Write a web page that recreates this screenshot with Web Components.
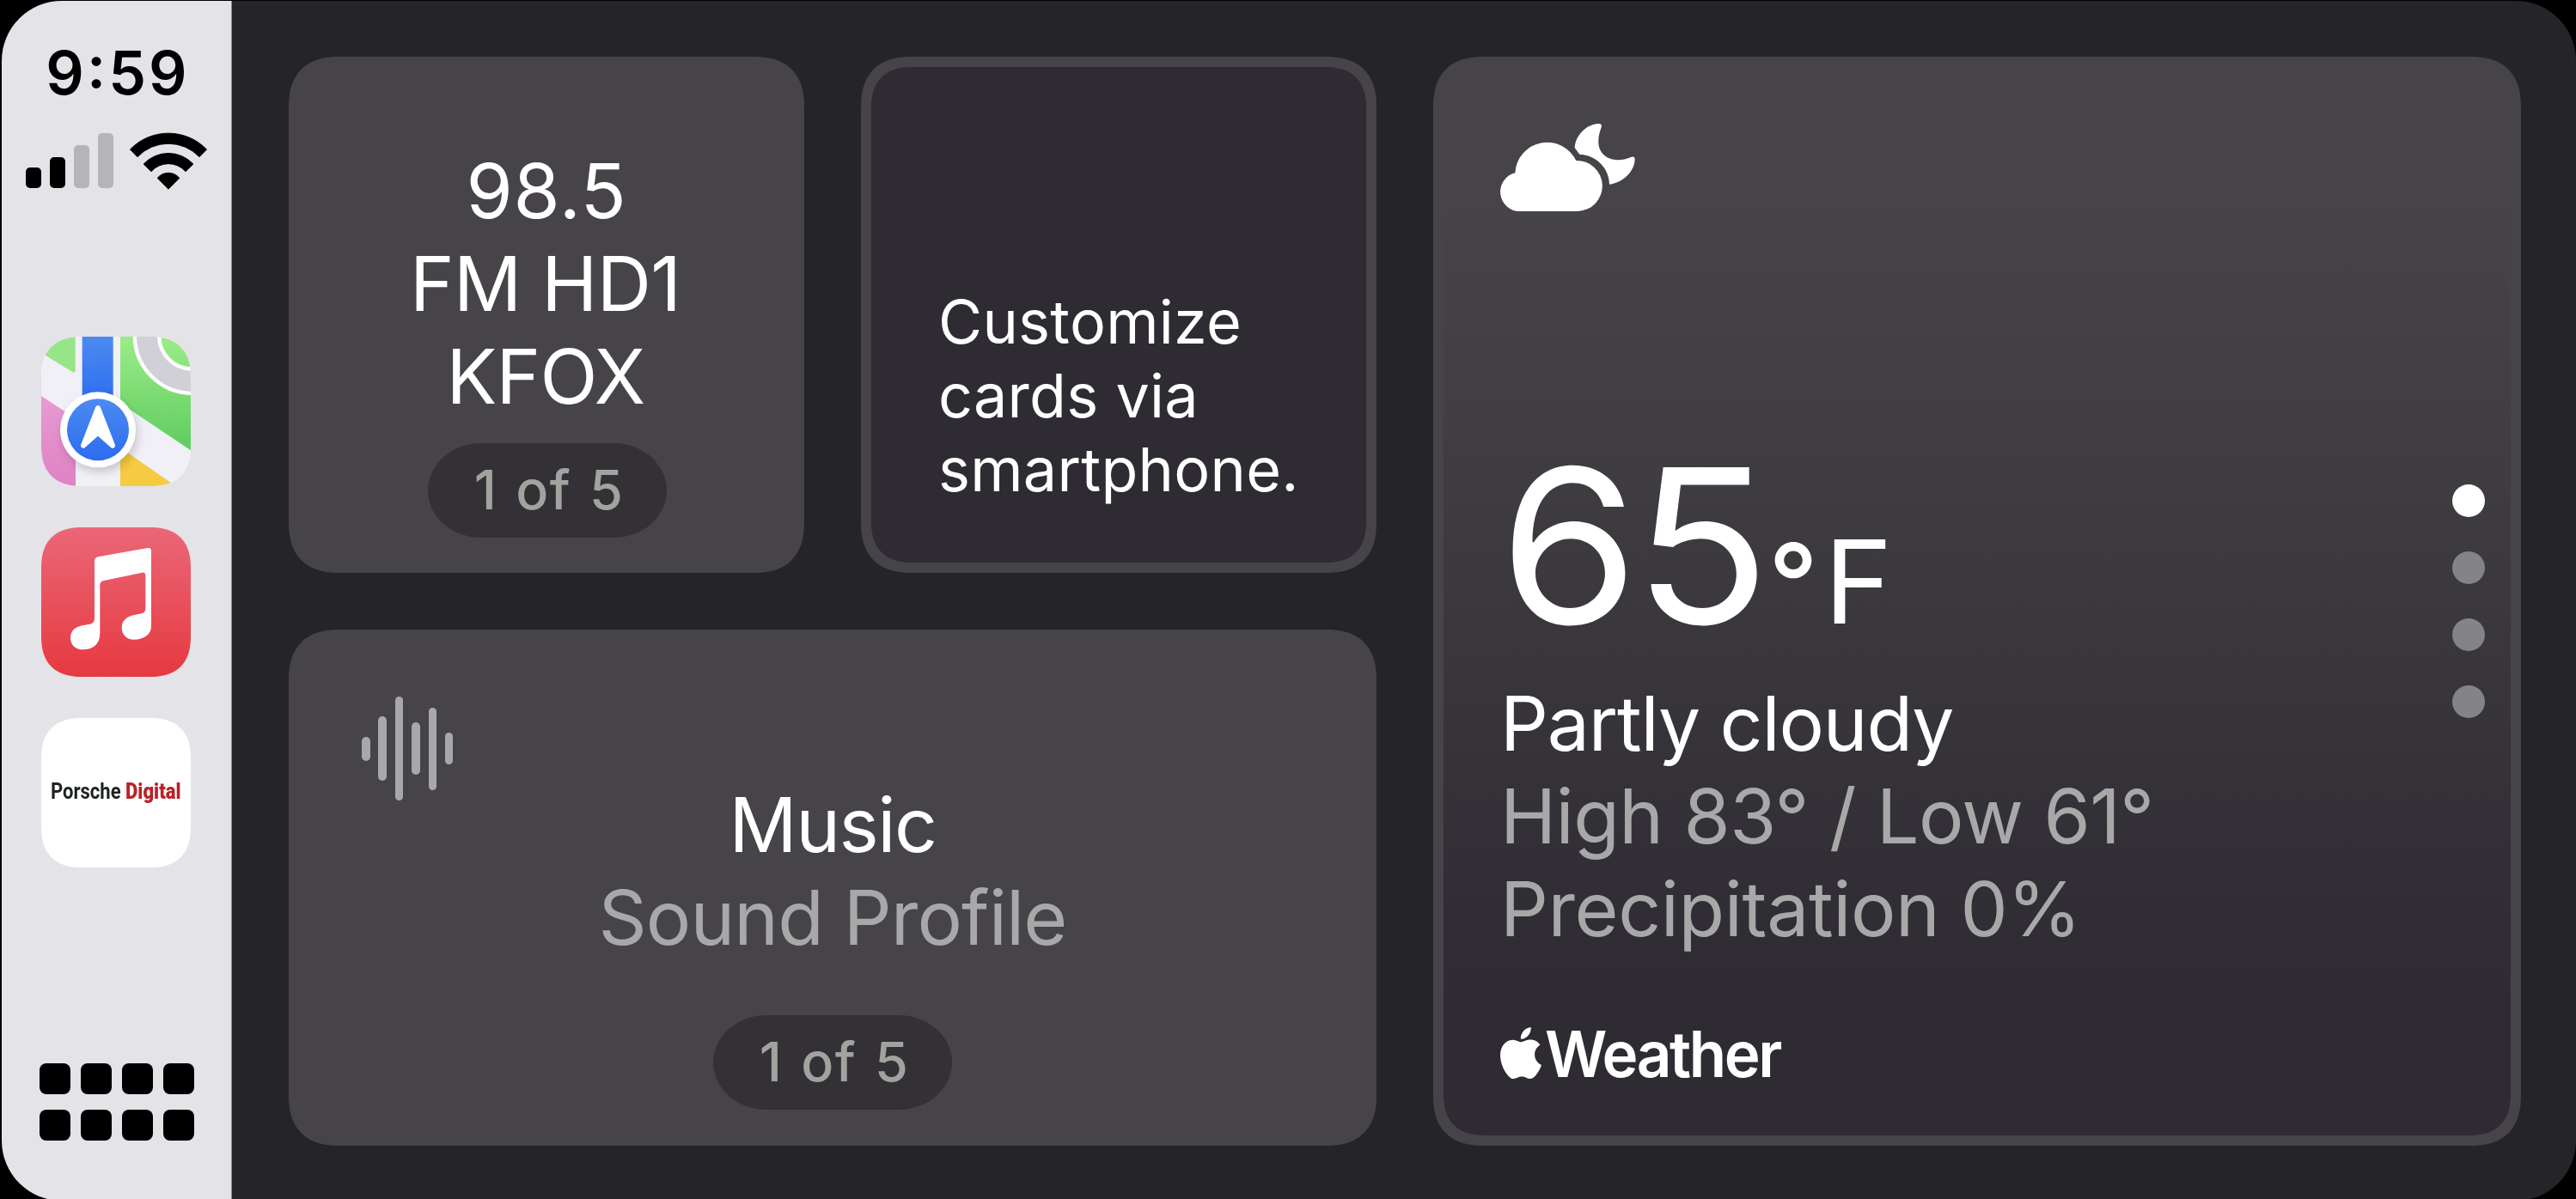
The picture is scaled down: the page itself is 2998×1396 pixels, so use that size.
<!DOCTYPE html>
<html lang="en">
<head>
<meta charset="utf-8">
<title>Dashboard</title>
<style>
  html, body { margin: 0; height: 100%; background: #000; overflow: hidden; }
  body { font-family: Inter, "Liberation Sans", sans-serif; color: #fff; }
</style>
</head>
<body>
<car-screen>
  <status-rail slot="rail" time="9:59">
    <app-icon name="maps"></app-icon>
    <app-icon name="music"></app-icon>
    <app-icon name="porsche"></app-icon>
  </status-rail>
  <radio-card slot="radio"></radio-card>
  <hint-card slot="hint"></hint-card>
  <sound-card slot="sound"></sound-card>
  <weather-card slot="weather"></weather-card>
</car-screen>

<script>
  const define = (name, html) => customElements.define(name, class extends HTMLElement {
    constructor() {
      super();
      const t = document.createElement('template');
      t.innerHTML = typeof html === 'function' ? html(this) : html;
      this.attachShadow({ mode: 'open' }).append(t.content.cloneNode(true));
    }
  });

  const LINES = `
    .line { display: block; font-size: 87.6px; line-height: 108px; white-space: nowrap; }
    .muted { color: #a9a8a8; }`;

  /* Screen: rail on the left, card grid on the right */
  define('car-screen', `
    <style>
      :host { display: flex; box-sizing: border-box; width: 2998px; height: 1398px; padding: 1px 0 0 2px; background: #000; }
      .screen { display: flex; flex: 1; border-radius: 70px; overflow: hidden; background: #252429; }
      .grid {
        flex: 1; display: grid; box-sizing: border-box; padding: 65px 64px 63px 66px;
        grid-template-columns: 600px 600px 1fr; grid-template-rows: 601px 601px; gap: 66px;
        grid-template-areas: "radio hint weather" "sound sound weather";
      }
      ::slotted([slot=radio]) { grid-area: radio; }
      ::slotted([slot=hint]) { grid-area: hint; }
      ::slotted([slot=sound]) { grid-area: sound; }
      ::slotted([slot=weather]) { grid-area: weather; }
    </style>
    <div class="screen">
      <slot name="rail"></slot>
      <div class="grid">
        <slot name="radio"></slot><slot name="hint"></slot><slot name="sound"></slot><slot name="weather"></slot>
      </div>
    </div>`);

  define('status-rail', el => `
    <style>
      :host { display: flex; flex-direction: column; align-items: center; box-sizing: border-box; width: 268px;
        background: #e4e3e8; border-right: 1px solid #8a898d; color: #000; }
      .time { margin: 49px 0 0 3px; font-size: 69.6px; line-height: 70px; font-weight: 560; letter-spacing: 3.1px; font-feature-settings: "case" 1; }
      .signal { display: flex; align-items: flex-end; gap: 18px; width: 212px; margin: 34px 0 0 1px; }
      .bars { display: flex; align-items: flex-end; gap: 10px; margin-bottom: 2px; }
      .bars i { width: 18px; border-radius: 5px; background: #000; }
      .bars i.off { background: #b5b4b9; }
      .apps { display: flex; flex-direction: column; gap: 48px; margin: 171px 1.5px 0 0; }
      .launcher { display: grid; grid-template-columns: repeat(4, 36px); gap: 18px 12px; margin: 228px 9px 0; }
      .launcher i { height: 36px; border-radius: 8px; background: #000; }
    </style>
    <div class="time">${el.getAttribute('time')}</div>
    <div class="signal">
      <div class="bars"><i style="height:24px"></i><i style="height:36px"></i><i class="off" style="height:50px"></i><i class="off" style="height:64px"></i></div>
      <svg width="92" height="67" viewBox="450 460 276 201" fill="#000" stroke="#000" stroke-width="3" stroke-linejoin="round">
        <path d="M454.500 520A186 186 0 0 1 721.500 520L696 546A149 149 0 0 0 480 546Z"/>
        <path d="M501.500 571A118 118 0 0 1 674.500 571L648 597A80 80 0 0 0 528 597Z"/>
        <path d="M549.500 620A50 50 0 0 1 626.500 620L588 658.500Z"/>
      </svg>
    </div>
    <div class="apps"><slot></slot></div>
    <div class="launcher"><i></i><i></i><i></i><i></i><i></i><i></i><i></i><i></i></div>`);

  const ICONS = {
    maps: `<svg viewBox="0 0 522 522">
      <defs>
        <linearGradient id="g" x1="0" y1="0" x2="0" y2="1"><stop offset=".05" stop-color="#98eb86"/><stop offset="1" stop-color="#5ecb60"/></linearGradient>
        <linearGradient id="b" x1="0" y1="0" x2="0" y2="1"><stop offset="0" stop-color="#4c8bf0"/><stop offset="1" stop-color="#2c6cf0"/></linearGradient>
        <linearGradient id="p" x1="0" y1="0" x2="0" y2="1"><stop offset="0" stop-color="#e79ad3"/><stop offset="1" stop-color="#e082c4"/></linearGradient>
        <filter id="s" x="-30%" y="-30%" width="160%" height="160%"><feGaussianBlur stdDeviation="16"/></filter>
        <clipPath id="c"><path d="M276 0H522V397L276 232Z"/></clipPath>
      </defs>
      <rect width="522" height="522" fill="#f1f0f6"/>
      <path d="M0 56V0H119V118Q119 128 110 124Z" fill="#96e588"/>
      <path d="M0 207L120 286V522H0Z" fill="url(#p)"/>
      <path d="M276 388L301 405L470 522H276Z" fill="#f6cb41"/>
      <g clip-path="url(#c)">
        <rect x="276" width="246" height="400" fill="url(#g)"/>
        <circle cx="527" cy="-3" r="158" fill="none" stroke="#fff" stroke-width="98"/>
        <circle cx="527" cy="-3" r="158" fill="none" stroke="#d2d0d7" stroke-width="72"/>
      </g>
      <rect x="143" width="108" height="240" fill="url(#b)"/>
      <circle cx="205" cy="340" r="132" fill="#000" opacity=".18" filter="url(#s)"/>
      <circle cx="198" cy="325" r="132" fill="#fff"/>
      <circle cx="198" cy="325" r="108" fill="url(#b)"/>
      <path d="M198 249L147 380L198 335L249 380Z" fill="#fff" stroke="#fff" stroke-width="18" stroke-linejoin="round"/>
    </svg>`,
    music: `<svg viewBox="0 0 522 522">
      <defs><linearGradient id="r" x1="0" y1="0" x2="0" y2="1"><stop offset="0" stop-color="#ea6777"/><stop offset="1" stop-color="#e63940"/></linearGradient></defs>
      <rect width="522" height="522" fill="url(#r)"/>
      <path fill="#fff" d="M186 118Q186 106 198 103L372 72Q384 70 384 82V345C384 375 358 392 324 392C298 392 281 374 281 350C281 325 300 310 325 306L350 301Q364 297 364 284V168Q364 156 352 158L216 187Q205 190 205 202V370C205 410 180 427 145 427C118 427 102 409 102 386C102 360 120 346 147 342L170 338Q186 335 186 318Z"/>
    </svg>`,
    porsche: `<span class="brand">Porsche <b>Digital</b></span>`
  };

  define('app-icon', el => `
    <style>
      :host { display: flex; align-items: center; justify-content: center; width: 174px; height: 174px; overflow: hidden;
        border-radius: 48px; corner-shape: superellipse(1.3); background: #fff; }
      svg { width: 100%; height: 100%; }
      .brand { font: 700 26.7px/32px Roboto, "Liberation Sans", sans-serif; color: #1f2224; white-space: nowrap; transform: scaleX(.826); margin-top: -4px; }
      b { color: #b8232a; }
    </style>${ICONS[el.getAttribute('name')]}`);

  define('page-pill', `
    <style>
      :host { display: flex; align-items: center; justify-content: center; box-sizing: border-box; width: 278px; height: 110px; padding: 0 0 3px 4px; border-radius: 62px / 55px;
        background: #333136; color: #a2a29f; font-size: 63px; line-height: 64px; font-weight: 530; letter-spacing: 1.3px; word-spacing: 3px; }
    </style><span><slot></slot></span>`);

  /* Rounded surface shared by every tile; "outlined" adds the rim */
  define('tile-surface', `
    <style>
      :host { display: flex; flex-direction: column; box-sizing: border-box; height: 100%;
        border-radius: 60px; corner-shape: superellipse(1.3); background: #464448; }
      :host([outlined]) { border: 12px solid #464448; background: #2e2c32 padding-box; }
      :host([fade]) { background: linear-gradient(#464448 12%, #403e43 34%, #39373c 54%, #312f35 76%, #2e2c32 88%) padding-box, #464448; }
    </style><slot></slot>`);

  define('radio-card', `
    <style>${LINES}
      :host { display: block; }
      tile-surface { align-items: center; padding-top: 102px; }
      page-pill { margin: 24px 0 0 2px; }
    </style>
    <tile-surface>
      <span class="line" style="letter-spacing:.8px">98.5</span>
      <span class="line" style="letter-spacing:-.7px;margin-right:3px">FM HD1</span>
      <span class="line" style="letter-spacing:-.87px;margin-right:2px">KFOX</span>
      <page-pill>1 of 5</page-pill>
    </tile-surface>`);

  define('hint-card', `
    <style>
      :host { display: block; }
      tile-surface { justify-content: flex-end; padding: 0 0 65px 78px; }
      p { margin: 0; font-size: 70px; line-height: 86px; letter-spacing: .3px; white-space: nowrap; }
    </style>
    <tile-surface outlined><p>Customize<br>cards via<br>smartphone.</p></tile-surface>`);

  define('sound-card', `
    <style>${LINES}
      :host { display: block; }
      tile-surface { align-items: center; padding-top: 78px; }
      .wave { display: flex; align-items: center; gap: 9.9px; align-self: flex-start; height: 121px; margin: 0 0 -26px 85px; }
      .wave i { width: 9.5px; border-radius: 5px; background: #a9a8a9; }
      page-pill { margin-top: 60px; }
    </style>
    <tile-surface>
      <div class="wave"><i style="height:28px"></i><i style="height:75px"></i><i style="height:121px"></i><i style="height:61px"></i><i style="height:96px"></i><i style="height:37px"></i></div>
      <span class="line" style="letter-spacing:-1.5px">Music</span>
      <span class="line muted" style="letter-spacing:-.87px">Sound Profile</span>
      <page-pill>1 of 5</page-pill>
    </tile-surface>`);

  define('page-dots', `
    <style>
      :host { display: flex; flex-direction: column; gap: 40px; }
      i { width: 38px; height: 38px; border-radius: 50%; background: #848388; }
      i.on { background: #fff; }
    </style><i class="on"></i><i></i><i></i><i></i>`);

  define('weather-card', `
    <style>${LINES}
      :host { display: block; }
      .row { display: flex; align-items: center; flex: 1; padding: 0 30px 0 66px; }
      .main { display: flex; flex-direction: column; flex: 1; align-self: stretch; }
      .cloud { width: 157px; height: 102px; margin-top: 66px; }
      .temp { display: flex; align-items: baseline; height: 268px; margin-top: 255px; white-space: nowrap; }
      .deg { width: 313px; margin-left: -1px; }
      .deg span { display: inline-block; font-size: 250px; line-height: 268px; letter-spacing: -5.4px; transform: scaleX(1.045); transform-origin: left; }
      .unit { width: 65px; font-size: 127px; line-height: 100px; font-weight: 460; transform: translateY(-2px); }
      .scale { font-size: 134.8px; line-height: 100px; }
      .facts { margin-top: 19px; }
      .brand { display: flex; align-items: flex-end; margin-top: 79px; font-size: 73.7px; line-height: 74px; font-weight: 600; letter-spacing: -2.5px; white-space: nowrap; }
      .brand svg { width: 48px; height: 60px; margin: 0 4px 9px 0; }
      .brand span { transform: scaleX(.963); transform-origin: left; }
    </style>
    <tile-surface outlined fade>
      <div class="row">
        <div class="main">
          <svg class="cloud" viewBox="0 0 469 306" fill="#fff">
            <path d="M68 306A68 68 0 0 1 51 172A112 112 0 0 1 264 129A88.500 88.500 0 0 1 270 306Z"/>
            <path d="M342 0C302 1 262 39 259 84L276 107C332 109 380 154 380 212C432 204 469 164 469 122Q467 113 458 116C392 144 342 114 342 64C342 39 348 25 353 10Q354 0 342 0Z"/>
          </svg>
          <div class="temp"><div class="deg"><span>65</span></div><span class="unit">°</span><span class="scale">F</span></div>
          <div class="facts">
            <span class="line" style="letter-spacing:-1.16px">Partly cloudy</span>
            <span class="line muted" style="letter-spacing:-.57px">High 83° / Low 61°</span>
            <span class="line muted" style="letter-spacing:-.44px">Precipitation 0%</span>
          </div>
          <div class="brand">
            <svg viewBox="2.200 0 19.600 24" preserveAspectRatio="none" fill="#fff"><path d="M12.152 6.896c-.948 0-2.415-1.078-3.960-1.040-2.040.027-3.910 1.183-4.961 3.014-2.117 3.675-.546 9.103 1.519 12.090 1.013 1.454 2.208 3.090 3.792 3.039 1.520-.065 2.090-.987 3.935-.987 1.831 0 2.350.987 3.960.948 1.637-.026 2.676-1.480 3.676-2.948 1.156-1.688 1.636-3.325 1.662-3.415-.039-.013-3.182-1.221-3.220-4.857-.026-3.040 2.480-4.494 2.597-4.559-1.429-2.090-3.623-2.324-4.390-2.376-2-.156-3.675 1.090-4.610 1.090zM15.530 3.830c.843-1.012 1.400-2.427 1.245-3.830-1.207.052-2.662.805-3.532 1.818-.780.896-1.454 2.338-1.273 3.714 1.338.104 2.715-.688 3.559-1.701"/></svg>
            <span>Weather</span>
          </div>
        </div>
        <page-dots></page-dots>
      </div>
    </tile-surface>`);
</script>
</body>
</html>
